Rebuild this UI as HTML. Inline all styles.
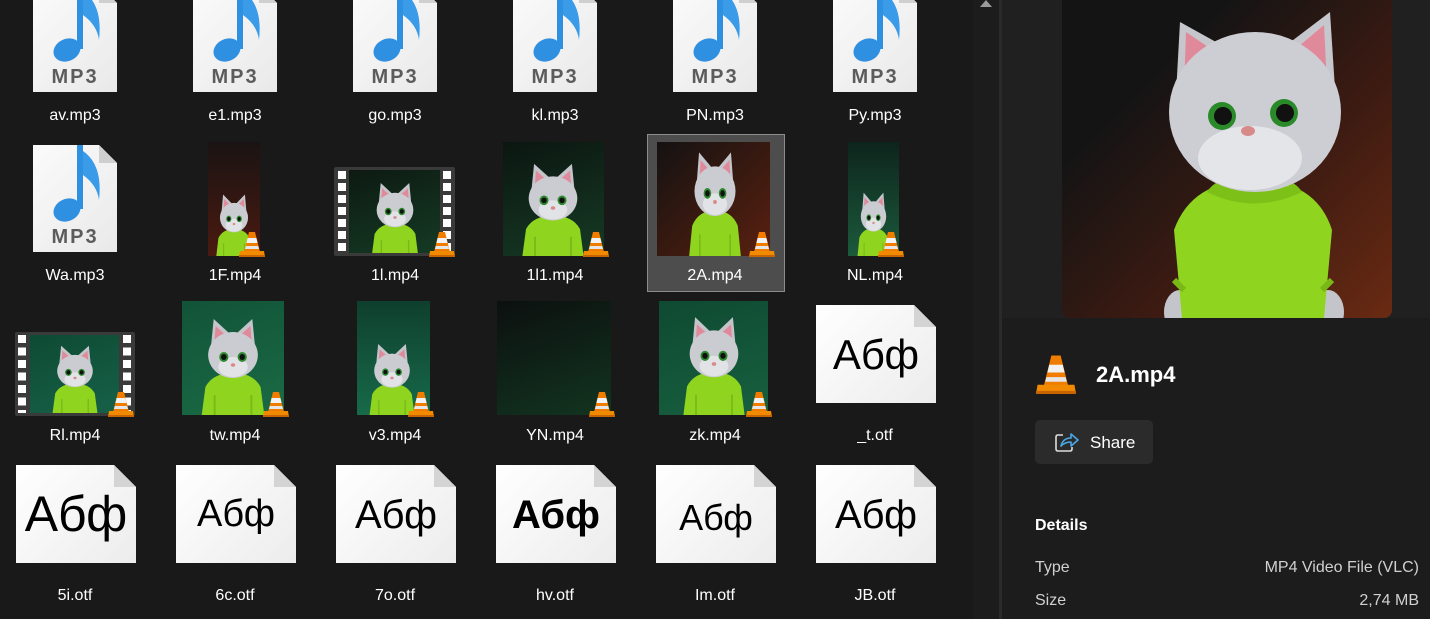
<!DOCTYPE html>
<html><head><meta charset="utf-8">
<style>
*{margin:0;padding:0;box-sizing:border-box}
body{width:1430px;height:619px;overflow:hidden;background:#191919;font-family:"Liberation Sans","DejaVu Sans",sans-serif;position:relative}
.a{position:absolute}
.lbl{position:absolute;width:150px;text-align:center;color:#fff;font-size:16px;line-height:20px}
.mp3{position:absolute;width:84px;height:107px;background:linear-gradient(135deg,#fbfbfb,#e9e9e9);clip-path:polygon(0 0,66px 0,84px 18px,84px 100%,0 100%)}
.mp3 .fold{position:absolute;left:66px;top:0;width:18px;height:18px;background:linear-gradient(225deg,#f4f4f4 50%,#cfcfcf 50%)}
.mp3 .t{position:absolute;left:0;width:84px;top:81px;text-align:center;font-weight:bold;font-size:20px;letter-spacing:2px;color:#5c5c5c}
.font{position:absolute;width:120px;height:98px;background:linear-gradient(135deg,#fff,#ececec);clip-path:polygon(0 0,98px 0,120px 22px,120px 100%,0 100%)}
.font .fold{position:absolute;left:98px;top:0;width:22px;height:22px;background:linear-gradient(225deg,#f5f5f5 50%,#d4d4d4 50%)}
.font .t{position:absolute;left:0;width:120px;text-align:center;color:#000;font-family:"Liberation Sans",sans-serif}
.th{position:absolute;overflow:visible}
.th svg.cat{position:absolute}
.cone{position:absolute;width:26px;height:28px}
</style></head><body>
<svg width="0" height="0" style="position:absolute">
<defs>
<symbol id="cat" viewBox="0 0 100 100" preserveAspectRatio="none">
<path d="M16 100 L20 72 Q28 58 50 58 Q72 58 80 72 L84 100 Z" fill="#8fd41f"/>
<path d="M30 100 L30 80 M70 100 L70 80" stroke="#7ab818" stroke-width="2"/>
<polygon points="26,32 29,4 48,20" fill="#c4c5cb"/>
<polygon points="74,32 71,4 52,20" fill="#c4c5cb"/>
<polygon points="30,26 31,11 42,20" fill="#e0899a"/>
<polygon points="70,26 69,11 58,20" fill="#e0899a"/>
<ellipse cx="50" cy="40" rx="27" ry="23" fill="#cbccd2"/>
<ellipse cx="50" cy="52" rx="16" ry="10" fill="#e2e3e7"/>
<circle cx="40" cy="42" r="5" fill="#2f8a2f"/><circle cx="40" cy="42" r="3" fill="#111"/>
<circle cx="60" cy="42" r="5" fill="#2f8a2f"/><circle cx="60" cy="42" r="3" fill="#111"/>
<ellipse cx="50" cy="50" rx="2.5" ry="1.8" fill="#d88a8a"/>
</symbol>
<symbol id="cone" viewBox="0 0 26 28">
<path d="M10 2 L16 2 L21 22 L5 22 Z" fill="#f07d00"/>
<path d="M8.6 8 L17.4 8 L18.6 13 L7.4 13 Z" fill="#f2f2f2"/>
<path d="M6.8 16 L19.2 16 L20 19 L6 19 Z" fill="#e6e6e6"/>
<path d="M1 21 L25 21 L26 27 L0 27 Z" fill="#f28a00"/>
<path d="M0 25 L26 25 L26 27 L0 27 Z" fill="#c86400"/>
</symbol>
<symbol id="note" viewBox="0 0 84 107">
<ellipse cx="34" cy="65" rx="14" ry="11" transform="rotate(-25 34 65)" fill="#2f8fe0"/>
<rect x="44" y="0" width="6" height="64" fill="#2f8fe0"/>
<path d="M50 6 Q70 20 66 55 Q64 40 50 30 Z" fill="#3a9be8"/>
</symbol>
</defs>
</svg>

<div class="a" style="left:973px;top:0;width:26px;height:619px;background:#1c1c1c"></div>
<div class="a" style="left:980px;top:0;width:0;height:0;border-left:6px solid transparent;border-right:6px solid transparent;border-bottom:7px solid #9a9a9a"></div>
<div class="a" style="left:999px;top:0;width:3px;height:619px;background:#2a2a2a"></div>

<div class="mp3" style="left:33px;top:-15px"><div class="fold"></div><svg width="84" height="107" class="a"><use href="#note"/></svg><div class="t">MP3</div></div>
<div class="mp3" style="left:193px;top:-15px"><div class="fold"></div><svg width="84" height="107" class="a"><use href="#note"/></svg><div class="t">MP3</div></div>
<div class="mp3" style="left:353px;top:-15px"><div class="fold"></div><svg width="84" height="107" class="a"><use href="#note"/></svg><div class="t">MP3</div></div>
<div class="mp3" style="left:513px;top:-15px"><div class="fold"></div><svg width="84" height="107" class="a"><use href="#note"/></svg><div class="t">MP3</div></div>
<div class="mp3" style="left:673px;top:-15px"><div class="fold"></div><svg width="84" height="107" class="a"><use href="#note"/></svg><div class="t">MP3</div></div>
<div class="mp3" style="left:833px;top:-15px"><div class="fold"></div><svg width="84" height="107" class="a"><use href="#note"/></svg><div class="t">MP3</div></div>
<div class="lbl" style="left:0;top:106px">av.mp3</div>
<div class="lbl" style="left:160px;top:106px">e1.mp3</div>
<div class="lbl" style="left:320px;top:106px">go.mp3</div>
<div class="lbl" style="left:480px;top:106px">kl.mp3</div>
<div class="lbl" style="left:640px;top:106px">PN.mp3</div>
<div class="lbl" style="left:800px;top:106px">Py.mp3</div>

<div class="mp3" style="left:33px;top:145px"><div class="fold"></div><svg width="84" height="107" class="a"><use href="#note"/></svg><div class="t">MP3</div></div>

<div class="a" style="left:647px;top:134px;width:138px;height:158px;background:#4d4d4d;border:1px solid #8c8c8c"></div>

<div class="th" style="left:208px;top:142px;width:52px;height:114px;background:linear-gradient(180deg,#1a1313,#4a1a10)"><svg class="cat" style="left:0;top:50px" width="52" height="64"><use href="#cat"/></svg></div>
<div class="th" style="left:334px;top:167px;width:121px;height:89px;background:#3a3a3a;border-radius:2px">
 <div class="a" style="left:4px;top:4px;width:8px;height:82px;background:repeating-linear-gradient(180deg,#fff 0 8px,transparent 8px 12px)"></div>
 <div class="a" style="left:109px;top:4px;width:8px;height:82px;background:repeating-linear-gradient(180deg,#fff 0 8px,transparent 8px 12px)"></div>
 <div class="a" style="left:15px;top:3px;width:91px;height:83px;background:linear-gradient(160deg,#0d1a12,#153a24);overflow:hidden"><svg class="cat" style="left:12px;top:10px" width="68" height="75"><use href="#cat"/></svg></div>
</div>
<div class="th" style="left:503px;top:142px;width:101px;height:114px;background:linear-gradient(160deg,#0b1610,#163a25);overflow:hidden"><svg class="cat" style="left:5px;top:18px" width="90" height="96"><use href="#cat"/></svg></div>
<div class="th" style="left:657px;top:142px;width:113px;height:114px;background:linear-gradient(135deg,#141212,#5a200f);overflow:hidden"><svg class="cat" style="left:20px;top:6px" width="76" height="108"><use href="#cat"/></svg></div>
<div class="th" style="left:848px;top:142px;width:51px;height:114px;background:linear-gradient(180deg,#0d241c,#1c5a3c);overflow:hidden"><svg class="cat" style="left:2px;top:48px" width="47" height="66"><use href="#cat"/></svg></div>

<svg class="cone" style="left:239px;top:230px"><use href="#cone"/></svg>
<svg class="cone" style="left:429px;top:230px"><use href="#cone"/></svg>
<svg class="cone" style="left:583px;top:230px"><use href="#cone"/></svg>
<svg class="cone" style="left:749px;top:230px"><use href="#cone"/></svg>
<svg class="cone" style="left:878px;top:230px"><use href="#cone"/></svg>

<div class="lbl" style="left:0;top:266px">Wa.mp3</div>
<div class="lbl" style="left:160px;top:266px">1F.mp4</div>
<div class="lbl" style="left:320px;top:266px">1l.mp4</div>
<div class="lbl" style="left:480px;top:266px">1l1.mp4</div>
<div class="lbl" style="left:640px;top:266px">2A.mp4</div>
<div class="lbl" style="left:800px;top:266px">NL.mp4</div>

<div class="th" style="left:15px;top:332px;width:120px;height:84px;background:#3a3a3a;border-radius:2px">
 <div class="a" style="left:3px;top:3px;width:8px;height:78px;background:repeating-linear-gradient(180deg,#fff 0 8px,transparent 8px 12.5px)"></div>
 <div class="a" style="left:108px;top:3px;width:8px;height:78px;background:repeating-linear-gradient(180deg,#fff 0 8px,transparent 8px 12.5px)"></div>
 <div class="a" style="left:15px;top:3px;width:89px;height:78px;background:linear-gradient(160deg,#0e4a34,#176148);overflow:hidden"><svg class="cat" style="left:12px;top:8px" width="66" height="70"><use href="#cat"/></svg></div>
</div>
<div class="th" style="left:182px;top:301px;width:102px;height:114px;background:linear-gradient(160deg,#125338,#1a6b45);overflow:hidden"><svg class="cat" style="left:5px;top:14px" width="92" height="100"><use href="#cat"/></svg></div>
<div class="th" style="left:357px;top:301px;width:73px;height:114px;background:linear-gradient(180deg,#0f3f2e,#176a4a);overflow:hidden"><svg class="cat" style="left:2px;top:40px" width="66" height="74"><use href="#cat"/></svg></div>
<div class="th" style="left:497px;top:301px;width:114px;height:114px;background:linear-gradient(160deg,#0c100f,#123420)"></div>
<div class="th" style="left:659px;top:301px;width:109px;height:114px;background:linear-gradient(160deg,#0f4a32,#17603f);overflow:hidden"><svg class="cat" style="left:10px;top:12px" width="90" height="102"><use href="#cat"/></svg></div>
<div class="font" style="left:816px;top:305px"><div class="fold"></div><div class="t" style="top:26px;font-size:42px">Абф</div></div>

<svg class="cone" style="left:108px;top:390px"><use href="#cone"/></svg>
<svg class="cone" style="left:263px;top:390px"><use href="#cone"/></svg>
<svg class="cone" style="left:408px;top:390px"><use href="#cone"/></svg>
<svg class="cone" style="left:589px;top:390px"><use href="#cone"/></svg>
<svg class="cone" style="left:746px;top:390px"><use href="#cone"/></svg>

<div class="lbl" style="left:0;top:426px">Rl.mp4</div>
<div class="lbl" style="left:160px;top:426px">tw.mp4</div>
<div class="lbl" style="left:320px;top:426px">v3.mp4</div>
<div class="lbl" style="left:480px;top:426px">YN.mp4</div>
<div class="lbl" style="left:640px;top:426px">zk.mp4</div>
<div class="lbl" style="left:800px;top:426px">_t.otf</div>

<div class="font" style="left:16px;top:465px"><div class="fold"></div><div class="t" style="top:20px;font-size:50px">Абф</div></div>
<div class="font" style="left:176px;top:465px"><div class="fold"></div><div class="t" style="top:28px;font-size:38px">Абф</div></div>
<div class="font" style="left:336px;top:465px"><div class="fold"></div><div class="t" style="top:28px;font-size:40px">Абф</div></div>
<div class="font" style="left:496px;top:465px"><div class="fold"></div><div class="t" style="top:28px;font-size:40px;font-weight:bold">Абф</div></div>
<div class="font" style="left:656px;top:465px"><div class="fold"></div><div class="t" style="top:32px;font-size:36px">Абф</div></div>
<div class="font" style="left:816px;top:465px"><div class="fold"></div><div class="t" style="top:28px;font-size:40px">Абф</div></div>
<div class="lbl" style="left:0;top:586px">5i.otf</div>
<div class="lbl" style="left:160px;top:586px">6c.otf</div>
<div class="lbl" style="left:320px;top:586px">7o.otf</div>
<div class="lbl" style="left:480px;top:586px">hv.otf</div>
<div class="lbl" style="left:640px;top:586px">Im.otf</div>
<div class="lbl" style="left:800px;top:586px">JB.otf</div>

<div class="a" style="left:1002px;top:0;width:428px;height:619px;background:#1c1c1c"></div>
<div class="a" style="left:1002px;top:0;width:428px;height:318px;background:#202020"></div>
<div class="a" style="left:1062px;top:0;width:330px;height:318px;border-radius:0 0 8px 8px;overflow:hidden;background:linear-gradient(135deg,#141414 25%,#3a1a12 60%,#6a2a12)">
 <svg class="a" style="left:0;top:0" width="330" height="318" viewBox="0 0 330 318">
  <ellipse cx="118" cy="312" rx="16" ry="22" fill="#c4c5cb"/>
  <ellipse cx="266" cy="312" rx="16" ry="22" fill="#c4c5cb"/>
  <path d="M120 318 L112 230 Q130 180 192 180 Q254 180 270 230 L262 318 Z" fill="#8fd41f"/>
  <path d="M145 192 Q192 215 240 192 Q230 175 192 175 Q155 175 145 192 Z" fill="#7cc018"/>
  <path d="M112 280 L122 290 M270 280 L260 290" stroke="#7ab818" stroke-width="6"/>
  <polygon points="112,130 118,22 172,52" fill="#c6c7cd"/>
  <polygon points="275,120 268,12 218,50" fill="#c6c7cd"/>
  <polygon points="122,90 124,32 158,55" fill="#e0899a"/>
  <polygon points="265,85 262,25 230,52" fill="#e0899a"/>
  <ellipse cx="193" cy="112" rx="86" ry="80" fill="#cdced4"/>
  <ellipse cx="188" cy="158" rx="52" ry="32" fill="#e4e5e9"/>
  <circle cx="160" cy="116" r="14" fill="#2a8a2a"/><circle cx="161" cy="116" r="9" fill="#111"/>
  <circle cx="222" cy="113" r="14" fill="#2a8a2a"/><circle cx="223" cy="113" r="9" fill="#111"/>
  <ellipse cx="186" cy="131" rx="7" ry="5" fill="#d88a8a"/>
 </svg>
</div>
<svg class="a" style="left:1036px;top:351px" width="40" height="46" viewBox="0 0 26 28"><use href="#cone"/></svg>
<div class="a" style="left:1096px;top:361px;color:#fff;font-size:22px;font-weight:bold;line-height:28px">2A.mp4</div>
<div class="a" style="left:1035px;top:420px;width:118px;height:44px;background:#2b2b2b;border-radius:5px"></div>
<svg class="a" style="left:1055px;top:431px" width="24" height="22" viewBox="0 0 24 22">
<path d="M8 4 H3 Q1 4 1 6 V18 Q1 20 3 20 H15 Q17 20 17 18 V16" fill="none" stroke="#ddd" stroke-width="1.6"/>
<path d="M6 15 Q8 7 16 7 V3 L23 9 L16 15 V11 Q10 11 6 15 Z" fill="none" stroke="#4aa8e8" stroke-width="1.6" stroke-linejoin="round"/>
</svg>
<div class="a" style="left:1090px;top:432px;color:#fff;font-size:17px;line-height:22px">Share</div>
<div class="a" style="left:1035px;top:516px;color:#fff;font-size:16px;font-weight:bold;line-height:20px">Details</div>
<div class="a" style="left:1035px;top:558px;color:#d0d0d0;font-size:16px;line-height:20px">Type</div>
<div class="a" style="left:1035px;top:591px;color:#d0d0d0;font-size:16px;line-height:20px">Size</div>
<div class="a" style="left:1150px;width:269px;text-align:right;top:558px;color:#d0d0d0;font-size:16px;line-height:20px">MP4 Video File (VLC)</div>
<div class="a" style="left:1150px;width:269px;text-align:right;top:591px;color:#d0d0d0;font-size:16px;line-height:20px">2,74 MB</div>
</body></html>
